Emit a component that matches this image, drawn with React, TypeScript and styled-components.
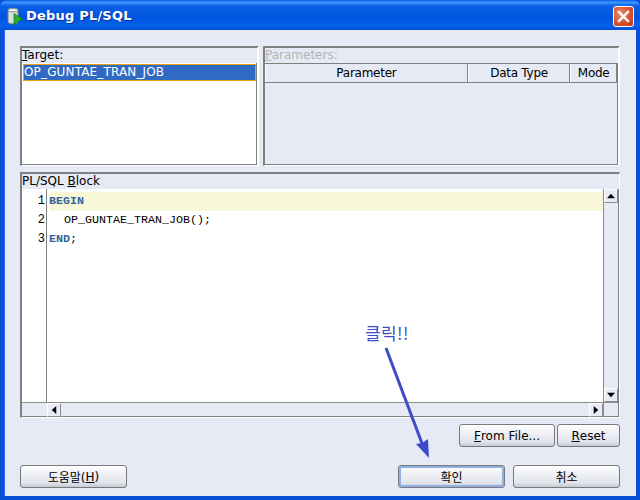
import styled, { createGlobalStyle } from "styled-components";

const GlobalStyle = createGlobalStyle`
  html, body {
    margin: 0;
    padding: 0;
    background: #0a4fd8;
  }
  * {
    box-sizing: border-box;
  }
`;

const ButtonFont = `"DejaVu Sans", "Noto Sans CJK KR", sans-serif`;

const App = () => {
  return (
    <Window>
      <GlobalStyle />
      <TitleBar>
        <AppIcon viewBox="0 0 16 18">
          <path d="M1 3c0-2.5 10-2.5 10 0v12c0 2.5-10 2.5-10 0z" fill="#d9dde0" stroke="#7d8a8a" strokeWidth="1" />
          <path d="M1 3c0 2.5 10 2.5 10 0" fill="#fff" stroke="#7d8a8a" strokeWidth="1" />
          <path d="M7 6.5l8.5 5.5-8.5 5.5z" fill="#25b02a" stroke="#0b6d12" strokeWidth="0.6" />
        </AppIcon>
        <TitleText>Debug PL/SQL</TitleText>
        <CloseButton>
          <svg width="13" height="13" viewBox="0 0 13 13">
            <path d="M2 2l9 9M11 2l-9 9" stroke="#fff" strokeWidth="2.4" strokeLinecap="square" fill="none" />
          </svg>
        </CloseButton>
      </TitleBar>

      <Body>
        <TopRow>
          <Group>
            <GroupLabel><u>T</u>arget:</GroupLabel>
            <TargetList>
              <TargetItem>OP_GUNTAE_TRAN_JOB</TargetItem>
            </TargetList>
          </Group>
          <Group>
            <GroupLabel $disabled><u>P</u>arameters:</GroupLabel>
            <ParamTable>
              <HeaderRow>
                <HeaderCell $width={204}>Parameter</HeaderCell>
                <HeaderCell $width={103}>Data Type</HeaderCell>
                <HeaderCell $width={47}>Mode</HeaderCell>
              </HeaderRow>
            </ParamTable>
          </Group>
        </TopRow>

        <BlockGroup>
          <GroupLabel>PL/SQL <u>B</u>lock</GroupLabel>
          <EditorFrame>
            <EditorMain>
              <Gutter>
                <GutterNumber>1</GutterNumber>
                <GutterNumber>2</GutterNumber>
                <GutterNumber>3</GutterNumber>
              </Gutter>
              <CodeArea>
                <CodeLine $current>
                  <Keyword>BEGIN</Keyword>
                </CodeLine>
                <CodeLine $indent={0}>{"  OP_GUNTAE_TRAN_JOB();"}</CodeLine>
                <CodeLine>
                  <Keyword>END</Keyword>;
                </CodeLine>
              </CodeArea>
              <VerticalBar>
                <ScrollButton>
                  <ArrowIcon viewBox="0 0 9 9">
                    <path d="M4.5 2L9 7H0z" />
                  </ArrowIcon>
                </ScrollButton>
                <ScrollTrack />
                <ScrollButton>
                  <ArrowIcon viewBox="0 0 9 9">
                    <path d="M4.5 7L9 2H0z" />
                  </ArrowIcon>
                </ScrollButton>
              </VerticalBar>
            </EditorMain>
            <HorizontalRow>
              <GutterSpacer />
              <ScrollButton>
                <ArrowIcon viewBox="0 0 9 9">
                  <path d="M2 4.5L7 0v9z" />
                </ArrowIcon>
              </ScrollButton>
              <ScrollTrack />
              <ScrollButton>
                <ArrowIcon viewBox="0 0 9 9">
                  <path d="M7 4.5L2 0v9z" />
                </ArrowIcon>
              </ScrollButton>
              <ScrollCorner />
            </HorizontalRow>
          </EditorFrame>
        </BlockGroup>

        <FileButtons>
          <DialogButton $width={96}><u>F</u>rom File...</DialogButton>
          <DialogButton $width={63}><u>R</u>eset</DialogButton>
        </FileButtons>

        <BottomRow>
          <DialogButton $width={107}>도움말(<u>H</u>)</DialogButton>
          <BottomRight>
            <DialogButton $width={107} $default>확인</DialogButton>
            <DialogButton $width={107}>취소</DialogButton>
          </BottomRight>
        </BottomRow>
      </Body>

      <Annotation>클릭!!</Annotation>
      <AnnotationArrow width="60" height="125" viewBox="0 0 60 125">
        <path d="M3 3L40 101" stroke="#3d4cc8" strokeWidth="3" fill="none" />
        <path d="M46 113L33 99L39 98L45 94z" fill="#3d4cc8" />
      </AnnotationArrow>
    </Window>
  );
};

export default App;

const Window = styled.div`
  position: relative;
  width: 640px;
  height: 500px;
  display: flex;
  flex-direction: column;
  overflow: hidden;
  background: #0a4fd8;
  border-radius: 7px 7px 0 0;
  font-family: ${ButtonFont};
  font-size: 12px;
  color: #000;
`;

const TitleBar = styled.div`
  height: 30px;
  flex-shrink: 0;
  display: flex;
  align-items: center;
  padding: 0 6px 0 7px;
  background: linear-gradient(
    180deg,
    #0a5be0 0%,
    #3d95ff 8%,
    #0a5fe6 20%,
    #0055e0 60%,
    #0461ea 85%,
    #0250d8 100%
  );
`;

const AppIcon = styled.svg`
  width: 16px;
  height: 18px;
  margin: 2px 3px 0 0;
`;

const TitleText = styled.div`
  flex: 1;
  color: #fff;
  font-family: "DejaVu Sans", sans-serif;
  font-size: 13px;
  font-weight: 700;
  letter-spacing: 0.2px;
  text-shadow: 1px 1px 0 #0f2f9a;
`;

const CloseButton = styled.div`
  width: 21px;
  height: 21px;
  margin-top: 3px;
  display: flex;
  align-items: center;
  justify-content: center;
  border: 1px solid #fff;
  border-radius: 3px;
  background: radial-gradient(circle at 35% 35%, #e98a6c 0%, #d8532c 55%, #b8361a 100%);
`;

const Body = styled.div`
  flex: 1;
  margin: 0 4px 4px 4px;
  padding: 16px 16px 8px 15px;
  display: flex;
  flex-direction: column;
  background: #e6eaf5;
  border-left: 1px solid #2a6cf0;
`;

const TopRow = styled.div`
  display: grid;
  grid-template-columns: 239px 357px;
  gap: 4px;
  height: 120px;
`;

const Group = styled.div`
  display: flex;
  flex-direction: column;
  min-width: 0;
  border-top: 2px solid #808080;
  border-left: 2px solid #808080;
  border-right: 2px solid #fff;
  border-bottom: 1px solid #fff;
`;

const BlockGroup = styled(Group)`
  height: 246px;
  margin-top: 6px;
  border-right-width: 1px;
`;

const GroupLabel = styled.div<{ $disabled?: boolean }>`
  height: 15px;
  line-height: 14px;
  flex-shrink: 0;
  white-space: nowrap;
  color: ${(props) => (props.$disabled ? "#b4b4b4" : "#000")};
`;

const TargetList = styled.div`
  flex: 1;
  background: #fff;
  border-right: 1px solid #808080;
  border-bottom: 1px solid #808080;
  padding: 1px 0 0 1px;
`;

const TargetItem = styled.div`
  height: 17px;
  line-height: 15px;
  letter-spacing: 0.15px;
  color: #fff;
  background: #316ac5;
  border: 1px solid #e8a010;
`;

const ParamTable = styled.div`
  flex: 1;
  border-top: 1px solid #808080;
  border-right: 1px solid #808080;
  border-bottom: 1px solid #808080;
`;

const HeaderRow = styled.div`
  display: flex;
  height: 19px;
  border-bottom: 1px solid #808080;
`;

const HeaderCell = styled.div<{ $width: number }>`
  width: ${(props) => props.$width}px;
  text-align: center;
  line-height: 18px;
  letter-spacing: -0.25px;
  border-right: 1px solid #808080;
  border-left: 1px solid #fff;
`;

const EditorFrame = styled.div`
  flex: 1;
  display: flex;
  flex-direction: column;
  min-height: 0;
  border-right: 1px solid #808080;
  border-bottom: 1px solid #808080;
`;

const EditorMain = styled.div`
  flex: 1;
  display: flex;
  min-height: 0;
`;

const Gutter = styled.div`
  width: 25px;
  flex-shrink: 0;
  padding-top: 3px;
  border-right: 1px solid #808080;
  background: #fff;
`;

const GutterNumber = styled.div`
  height: 19px;
  line-height: 19px;
  text-align: right;
  padding-right: 1px;
  font-family: "Liberation Mono", monospace;
  font-size: 12px;
`;

const CodeArea = styled.div`
  flex: 1;
  background: #fff;
  padding: 3px 0 0 3px;
  font-family: "Liberation Mono", monospace;
  font-size: 11.67px;
  white-space: pre;
`;

const CodeLine = styled.div<{ $current?: boolean; $indent?: number }>`
  height: 19px;
  line-height: 19px;
  text-indent: ${(props) => props.$indent ?? -1}px;
  background: ${(props) => (props.$current ? "#f8f8d8" : "transparent")};
`;

const Keyword = styled.span`
  color: #30659c;
  font-weight: 700;
`;

const VerticalBar = styled.div`
  width: 15px;
  flex-shrink: 0;
  display: flex;
  flex-direction: column;
  background: #e6eaf5;
  border-left: 1px solid #8c8c8c;
`;

const ScrollTrack = styled.div`
  flex: 1;
  background: #e6eaf5;
`;

const ScrollButton = styled.div`
  width: 14px;
  height: 14px;
  flex-shrink: 0;
  display: flex;
  align-items: center;
  justify-content: center;
  background: #e9ecf6;
  border-top: 1px solid #fff;
  border-left: 1px solid #fff;
  border-right: 1px solid #8c8c8c;
  border-bottom: 1px solid #8c8c8c;
`;

const ArrowIcon = styled.svg`
  width: 8px;
  height: 8px;
  fill: #000;
`;

const HorizontalRow = styled.div`
  display: flex;
  height: 14px;
  flex-shrink: 0;
  background: #e6eaf5;
  border-top: 1px solid #8c8c8c;
`;

const GutterSpacer = styled.div`
  width: 25px;
`;

const ScrollCorner = styled.div`
  width: 15px;
  border-left: 1px solid #8c8c8c;
`;

const FileButtons = styled.div`
  display: flex;
  justify-content: flex-end;
  gap: 2px;
  margin-top: 6px;
`;

const BottomRow = styled.div`
  display: flex;
  justify-content: space-between;
  margin-top: 18px;
`;

const BottomRight = styled.div`
  display: flex;
  gap: 8px;
`;

const DialogButton = styled.div<{ $width: number; $default?: boolean }>`
  width: ${(props) => props.$width}px;
  height: 23px;
  display: flex;
  align-items: center;
  justify-content: center;
  white-space: pre;
  border: 1px solid #7a7a7a;
  border-radius: 3px;
  background: linear-gradient(180deg, #fff 0%, #f2f3f7 30%, #e2e4ec 80%, #c6c8d4 100%);
  box-shadow: ${(props) => (props.$default ? "inset 0 0 0 2px #8fb0e0" : "none")};
  font-family: "DejaVu Sans", "Noto Sans CJK KR", sans-serif;
  font-size: 12px;
`;

const Annotation = styled.div`
  position: absolute;
  left: 365px;
  top: 323px;
  color: #3d4cc8;
  font-family: "Noto Sans CJK KR", sans-serif;
  font-size: 17px;
  line-height: 20px;
  letter-spacing: 0.4px;
`;

const AnnotationArrow = styled.svg`
  position: absolute;
  left: 383px;
  top: 345px;
`;
